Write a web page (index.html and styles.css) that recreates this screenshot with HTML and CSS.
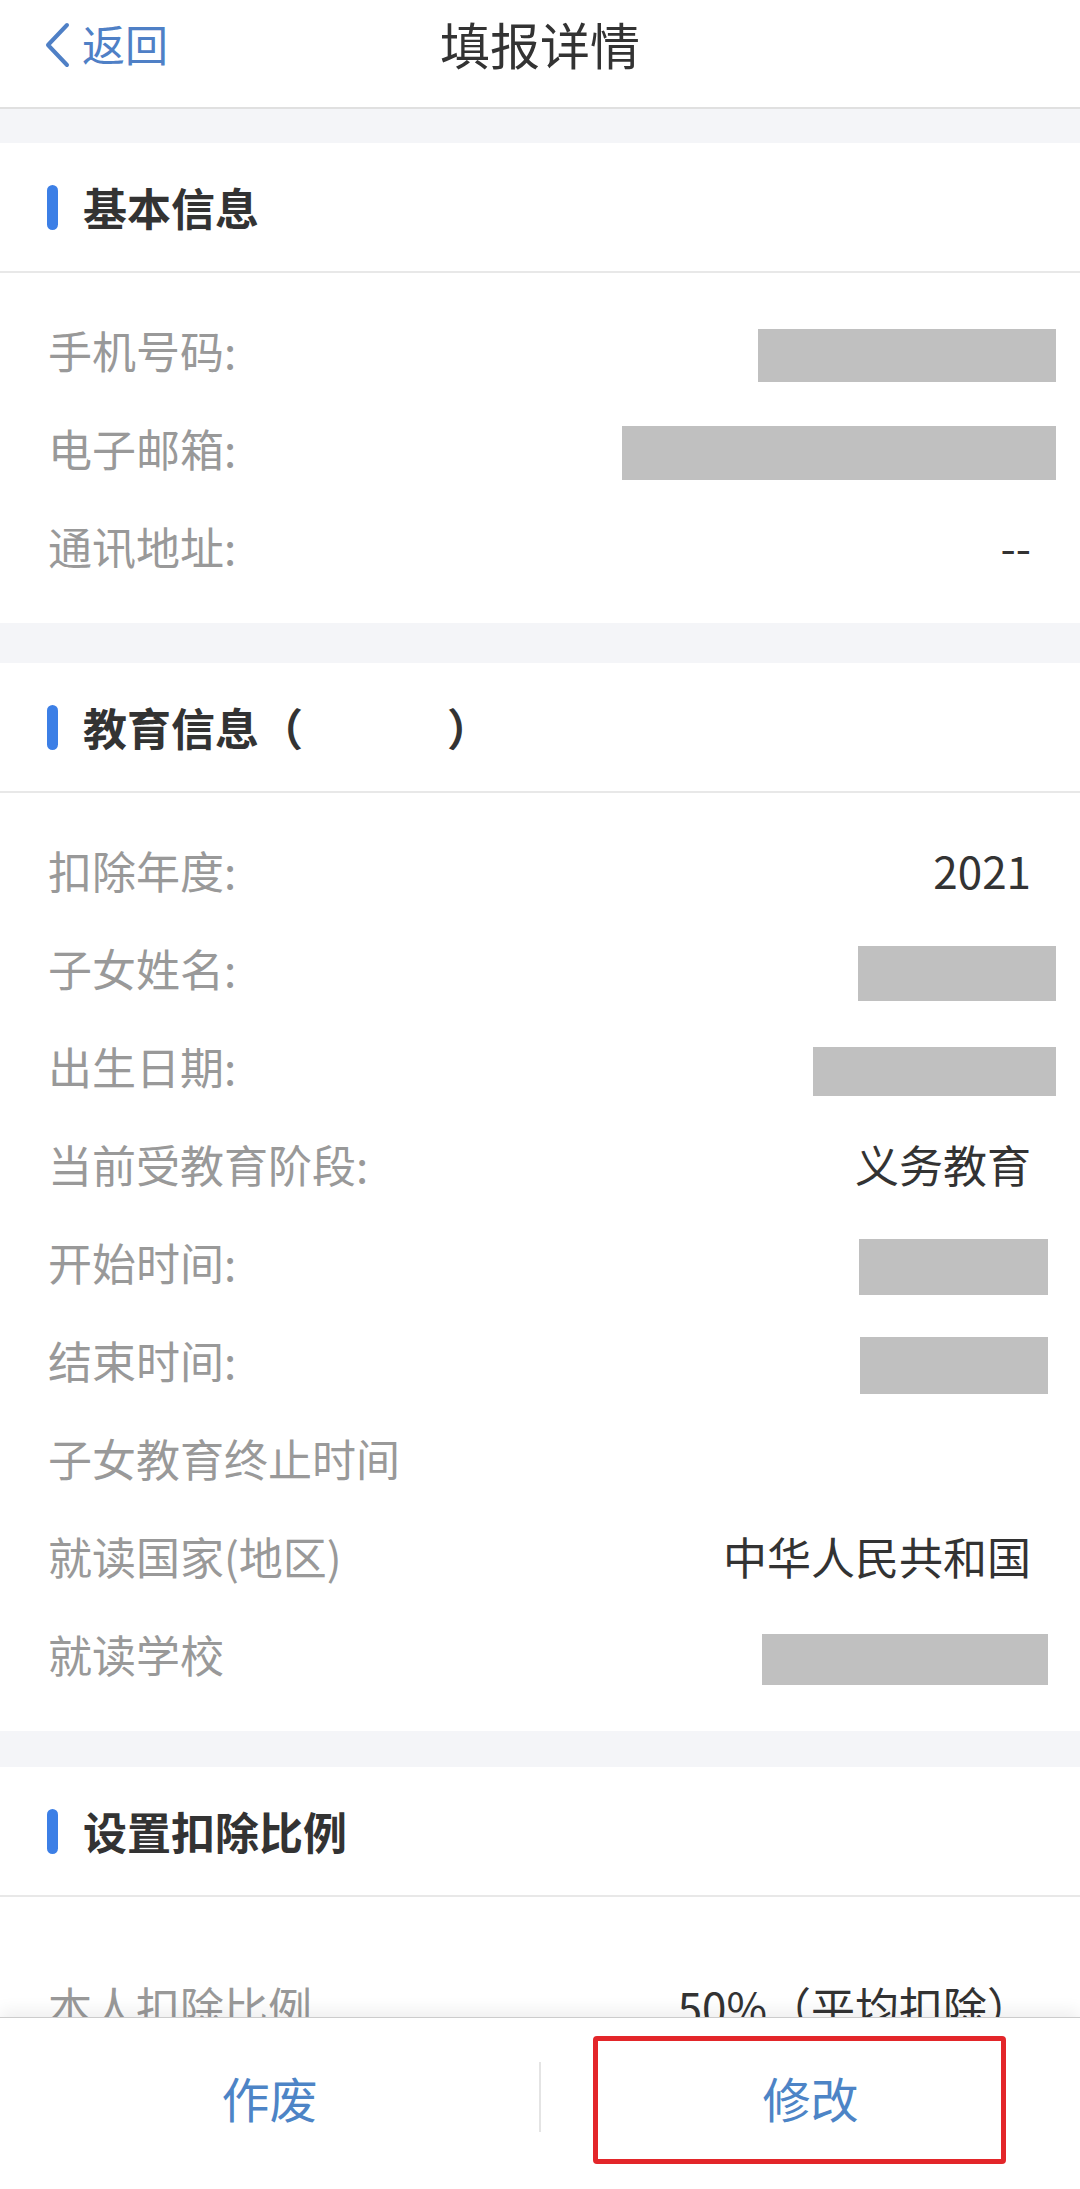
FILE: index.html
```html
<!DOCTYPE html>
<html lang="zh-CN">
  <head>
    <meta charset="UTF-8" />
    <title>填报详情</title>
    <link rel="stylesheet" href="styles.css">
  </head>
  <body>
    <div class="page">
      <!-- Nav bar -->
      <div class="nav-bar">
        <div class="back">
          <svg class="back-icon" width="28" height="46" viewBox="0 0 28 46">
            <polyline points="24,3 5,23 24,43" fill="none" stroke="#4f80c6" stroke-width="4" stroke-linecap="round" stroke-linejoin="round" />
          </svg>
          <span>返回</span>
        </div>
        <div class="nav-title">填报详情</div>
        <div></div>
      </div>

      <div class="content">
        <!-- Basic info -->
        <div class="section first">
          <div class="section-title"><i class="mark"></i>基本信息</div>
          <div class="rows">
            <div class="row">
              <span class="label">手机号码:</span>
              <span class="mask" style="width: 298px; height: 53px;"></span>
            </div>
            <div class="row">
              <span class="label">电子邮箱:</span>
              <span class="mask" style="width: 434px; height: 54px;"></span>
            </div>
            <div class="row">
              <span class="label">通讯地址:</span>
              <span class="value">--</span>
            </div>
          </div>
        </div>

        <!-- Education -->
        <div class="section">
          <div class="section-title"><i class="mark"></i>教育信息（<span class="blank"></span>）</div>
          <div class="rows">
            <div class="row">
              <span class="label">扣除年度:</span>
              <span class="value">2021</span>
            </div>
            <div class="row">
              <span class="label">子女姓名:</span>
              <span class="mask" style="width: 198px; height: 55px;"></span>
            </div>
            <div class="row">
              <span class="label">出生日期:</span>
              <span class="mask" style="width: 243px; height: 49px;"></span>
            </div>
            <div class="row">
              <span class="label">当前受教育阶段:</span>
              <span class="value">义务教育</span>
            </div>
            <div class="row">
              <span class="label">开始时间:</span>
              <span class="mask inset" style="width: 189px; height: 56px;"></span>
            </div>
            <div class="row">
              <span class="label">结束时间:</span>
              <span class="mask inset" style="width: 188px; height: 57px;"></span>
            </div>
            <div class="row">
              <span class="label">子女教育终止时间</span>
              <span class="value"></span>
            </div>
            <div class="row">
              <span class="label">就读国家(地区)</span>
              <span class="value">中华人民共和国</span>
            </div>
            <div class="row">
              <span class="label">就读学校</span>
              <span class="mask inset" style="width: 286px; height: 51px;"></span>
            </div>
          </div>
        </div>

        <!-- Ratio -->
        <div class="section ratio">
          <div class="section-title"><i class="mark"></i>设置扣除比例</div>
          <div class="rows rows-ratio">
            <div class="row">
              <span class="label">本人扣除比例</span>
              <span class="value">50%（平均扣除）</span>
            </div>
          </div>
        </div>
      </div>

      <!-- Bottom actions -->
      <div class="action-bar">
        <div class="action">作废</div>
        <div class="divider"></div>
        <div class="action">修改</div>
        <div class="highlight"></div>
      </div>
    </div>
  </body>
</html>
```

FILE: styles.css
```css
body {
  margin: 0;
  font-family: "Noto Sans CJK SC", "Noto Sans", sans-serif;
  background: #ffffff;
  color: #333333;
}

.page {
  height: 2189px;
  display: flex;
  flex-direction: column;
}

.nav-bar {
  flex: none;
  height: 109px;
  box-sizing: border-box;
  padding-bottom: 22px;
  display: grid;
  grid-template-columns: 1fr auto 1fr;
  align-items: center;
  border-bottom: 2px solid #e0e0e0;
  background: #ffffff;
}

.back {
  display: flex;
  align-items: center;
  gap: 11px;
  padding-left: 43px;
  font-size: 43px;
  color: #4f80c6;
}

.back-icon {
  display: block;
  margin-top: 4px;
}

.nav-title {
  font-size: 50px;
  color: #333333;
}

.content {
  flex: 1;
  overflow: hidden;
  background: #f4f5f8;
}

.section {
  margin-top: 40px;
  background: #ffffff;
}

.section.first {
  margin-top: 34px;
}

.section.ratio {
  margin-top: 36px;
}

.section-title {
  height: 128px;
  display: flex;
  align-items: center;
  padding-left: 47px;
  font-size: 44px;
  font-weight: bold;
  color: #333333;
  border-bottom: 2px solid #e8e8e8;
}

.mark {
  width: 11px;
  height: 45px;
  border-radius: 6px;
  background: #3c7fe6;
  margin-right: 25px;
}

.blank {
  display: inline-block;
  width: 144px;
}

.rows {
  padding: 28px 0;
}

.rows-ratio {
  padding-top: 60px;
}

.row {
  height: 98px;
  display: flex;
  align-items: center;
  justify-content: space-between;
  padding: 0 24px 0 48px;
  font-size: 44px;
}

.label {
  color: #999999;
}

.value {
  color: #333333;
  padding-right: 25px;
}

.mask {
  display: block;
  background: #c0c0c0;
  margin-top: 10px;
}

.mask.inset {
  margin-right: 8px;
}

.action-bar {
  flex: none;
  position: relative;
  z-index: 1;
  height: 172px;
  box-sizing: border-box;
  padding-bottom: 14px;
  display: flex;
  align-items: center;
  background: #ffffff;
  border-top: 1px solid #cccccc;
  box-shadow: 0 -6px 16px rgba(0, 0, 0, 0.07);
}

.action {
  flex: 1;
  text-align: center;
  font-size: 48px;
  color: #4d84c6;
}

.divider {
  width: 2px;
  height: 70px;
  background: #e4e4e4;
}

.highlight {
  position: absolute;
  left: 593px;
  top: 18px;
  width: 413px;
  height: 128px;
  box-sizing: border-box;
  border: 5px solid #e3262a;
  border-radius: 4px;
}
```
